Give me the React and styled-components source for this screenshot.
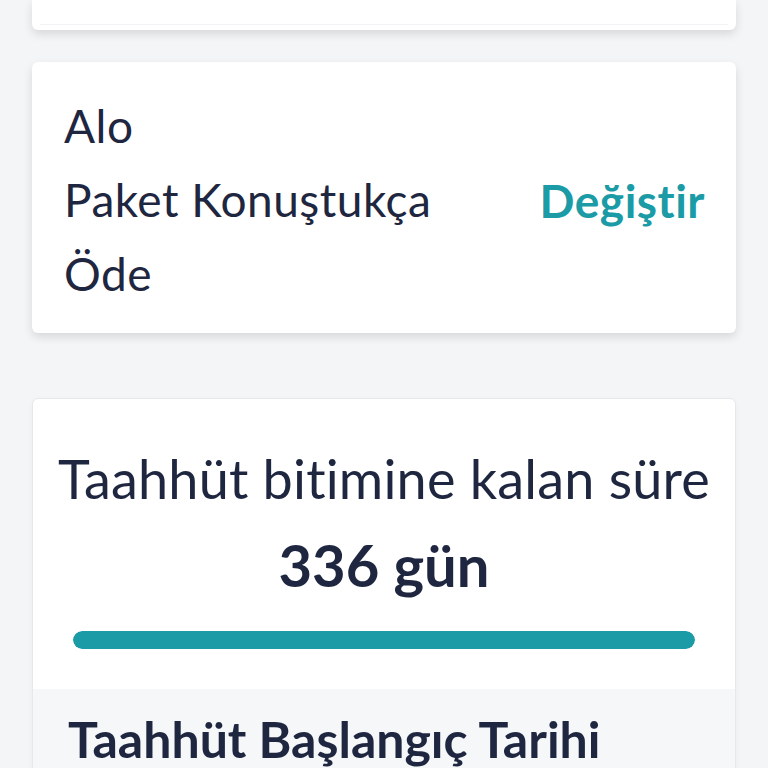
import React from 'react'
import styled, { createGlobalStyle } from 'styled-components'

const GlobalStyle = createGlobalStyle`
  html, body {
    margin: 0;
    padding: 0;
    background: #f4f5f7;
    font-family: Lato, "Noto Sans", "Liberation Sans", sans-serif;
    color: #1e2640;
  }
`

const Page = styled.div`
  display: flex;
  flex-direction: column;
  padding: 0 32px;
  height: 768px;
  overflow: hidden;
`

const TopCard = styled.div`
  flex-shrink: 0;
  height: 30px;
  background: #fff;
  border-radius: 0 0 6px 6px;
  box-shadow: 0 4px 10px rgba(0, 0, 0, 0.12);
  display: flex;
  flex-direction: column;
  justify-content: flex-end;
`

const TopDivider = styled.div`
  margin: 0 8px 5px;
  border-top: 1px solid #f1f2f4;
`

const PackageCard = styled.div`
  flex-shrink: 0;
  margin-top: 32px;
  background: #fff;
  border-radius: 6px;
  box-shadow: 0 4px 10px rgba(0, 0, 0, 0.12);
  padding: 27px 31px 22px 32px;
  display: flex;
  align-items: center;
  justify-content: space-between;
`

const PackageName = styled.div`
  font-size: 46px;
  letter-spacing: 0.5px;
  line-height: 74px;
`

const ChangeLink = styled.a`
  font-size: 46px;
  font-weight: 700;
  letter-spacing: 0.5px;
  color: #1a9ba6;
  text-decoration: none;
`

const CommitCard = styled.div`
  flex-shrink: 0;
  margin-top: 65px;
  background: #fff;
  border: 1px solid #e6e8eb;
  border-radius: 6px;
  box-shadow: 0 2px 6px rgba(0, 0, 0, 0.04);
  display: flex;
  flex-direction: column;
`

const Remaining = styled.div`
  padding: 50px 40px 40px;
  display: flex;
  flex-direction: column;
  align-items: center;
`

const RemainingLabel = styled.div`
  font-size: 54px;
  letter-spacing: 0.2px;
  line-height: 60px;
  white-space: nowrap;
`

const RemainingValue = styled.div`
  margin-top: 26px;
  font-size: 58px;
  font-weight: 700;
  line-height: 60px;
`

const Track = styled.div`
  align-self: stretch;
  margin-top: 36px;
  height: 18px;
  border-radius: 9px;
  background: #e4e7ea;
  overflow: hidden;
`

const Fill = styled.div`
  height: 100%;
  background: #1a9ba6;
  border-radius: 9px;
`

const DetailSection = styled.div`
  background: #f6f7f9;
  padding: 24px 35px;
`

const DetailTitle = styled.div`
  font-size: 50px;
  font-weight: 700;
  line-height: 52px;
  white-space: nowrap;
`

export default function App() {
  const progress = 100
  return (
    <>
      <GlobalStyle />
      <Page>
        <TopCard>
          <TopDivider />
        </TopCard>
        <PackageCard>
          <PackageName>
            Alo<br />
            Paket Konuştukça<br />
            Öde
          </PackageName>
          <ChangeLink href="#">Değiştir</ChangeLink>
        </PackageCard>
        <CommitCard>
          <Remaining>
            <RemainingLabel>Taahhüt bitimine kalan süre</RemainingLabel>
            <RemainingValue>336 gün</RemainingValue>
            <Track>
              <Fill style={{ width: `${progress}%` }} />
            </Track>
          </Remaining>
          <DetailSection>
            <DetailTitle>Taahhüt Başlangıç Tarihi</DetailTitle>
          </DetailSection>
        </CommitCard>
      </Page>
    </>
  )
}
